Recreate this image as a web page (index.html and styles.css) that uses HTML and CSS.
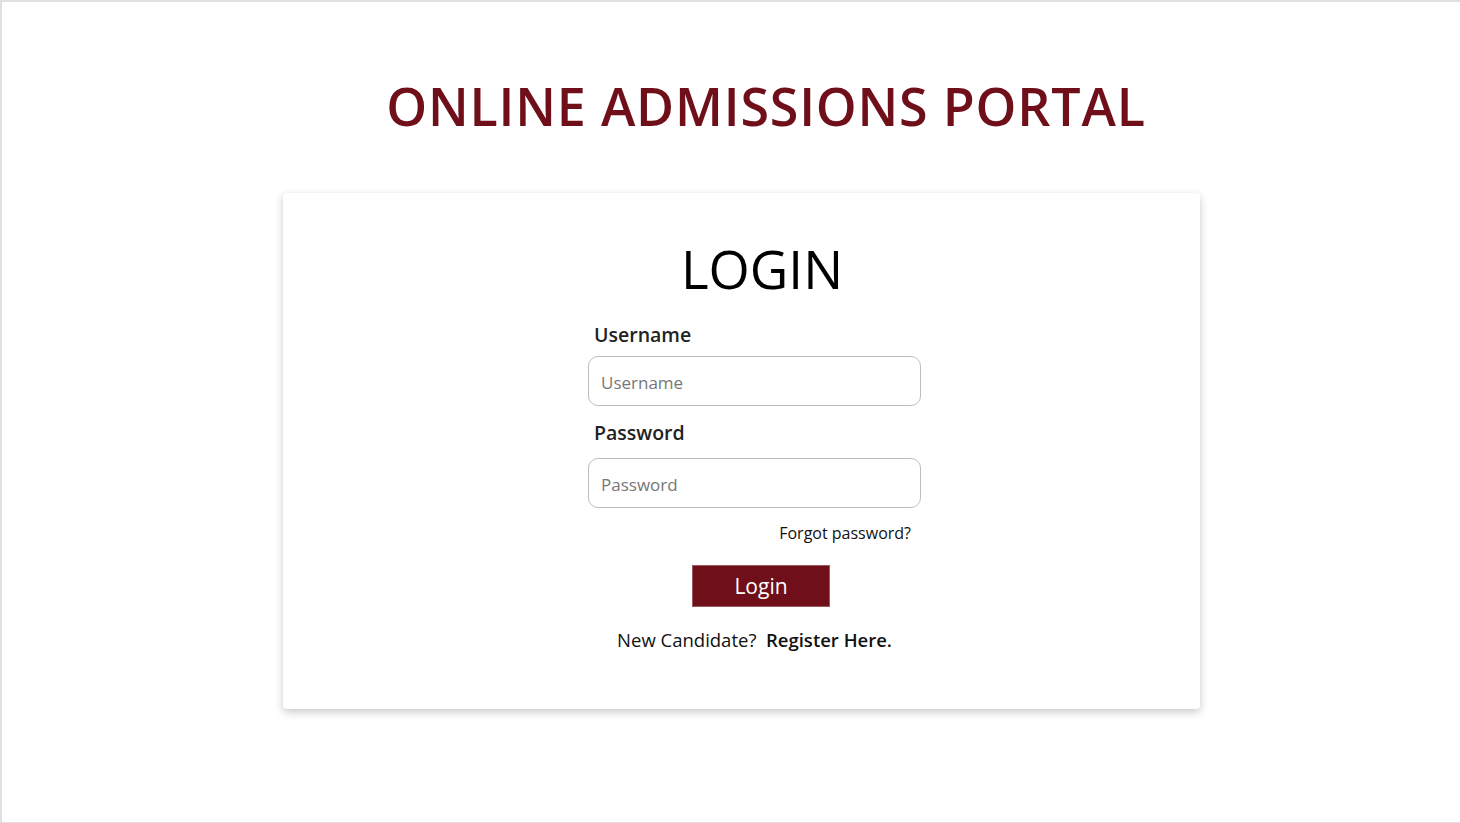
FILE: index.html
```html
<!DOCTYPE html>
<html lang="en">
<head>
<meta charset="utf-8">
<title>Online Admissions Portal</title>
<link rel="stylesheet" href="styles.css">
</head>
<body>
<div class="page">
  <h1 class="portal-title">ONLINE ADMISSIONS PORTAL</h1>
  <div class="card">
    <h2 class="login-title">LOGIN</h2>
    <form class="login-form">
      <label class="field-label" for="username">Username</label>
      <input class="field-input" id="username" type="text" placeholder="Username">
      <label class="field-label pw-label" for="password">Password</label>
      <input class="field-input" id="password" type="password" placeholder="Password">
      <div class="forgot-row"><a class="forgot-link" href="#">Forgot password?</a></div>
      <div class="btn-row"><button class="login-btn" type="button">Login</button></div>
      <p class="register-row">New Candidate?&nbsp; <a class="register-link" href="#">Register Here.</a></p>
    </form>
  </div>
</div>
</body>
</html>
```

FILE: styles.css
```css
html, body {
  margin: 0;
  padding: 0;
  background: #ffffff;
}
body {
  font-family: "Open Sans", "Noto Sans", sans-serif;
}
.page {
  box-sizing: border-box;
  height: 823px;
  border-top: 2px solid #e0e0e0;
  border-left: 2px solid #e0e0e0;
  border-bottom: 1px solid #e0e0e0;
  overflow: hidden;
}
.portal-title {
  margin: 0;
  padding-top: 68px;
  padding-left: 70px;
  text-align: center;
  font-size: 52px;
  font-weight: 600;
  color: #6f0f1a;
  letter-spacing: 0.8px;
  line-height: 71px;
}
.card {
  box-sizing: border-box;
  width: 917px;
  height: 516px;
  margin-top: 52px;
  margin-left: 281px;
  background: #fff;
  border-radius: 4px;
  box-shadow: 0 3px 8px rgba(0, 0, 0, 0.22);
  padding-top: 40px;
}
.login-title {
  margin: 0;
  text-align: center;
  padding-left: 41px;
  font-size: 53px;
  font-weight: 400;
  color: #000;
  line-height: 72px;
}
.login-form {
  width: 333px;
  margin-left: 305px;
  display: flex;
  flex-direction: column;
}
.field-label {
  padding-left: 6px;
  font-size: 19.5px;
  font-weight: 600;
  color: #222;
  line-height: 27px;
  margin-top: 16px;
  margin-bottom: 8px;
}
.pw-label {
  margin-top: 13px;
  margin-bottom: 12px;
}
.field-input {
  box-sizing: border-box;
  width: 333px;
  height: 50px;
  border: 1px solid #bdbdbd;
  border-radius: 10px;
  padding: 2px 12px 0;
  font-family: "Open Sans", sans-serif;
  font-size: 17px;
  color: #333;
  outline: none;
}
.field-input::placeholder {
  color: #777;
}
.forgot-row {
  display: flex;
  justify-content: flex-end;
  padding-right: 10px;
  margin-top: 14px;
}
.forgot-link {
  font-size: 16px;
  color: #111;
  text-decoration: none;
  line-height: 22px;
}
.btn-row {
  margin-top: 21px;
  padding-left: 104px;
}
.login-btn {
  width: 138px;
  height: 42px;
  border: 1px solid #9a5a60;
  background: #6f0f1a;
  color: #fff;
  font-family: "Open Sans", sans-serif;
  font-size: 21px;
  padding: 0;
  line-height: 40px;
}
.register-row {
  margin: 20px 0 0;
  text-align: center;
  font-size: 18.5px;
  color: #111;
  line-height: 26px;
}
.register-link {
  color: #111;
  font-weight: 600;
  text-decoration: none;
}
```
